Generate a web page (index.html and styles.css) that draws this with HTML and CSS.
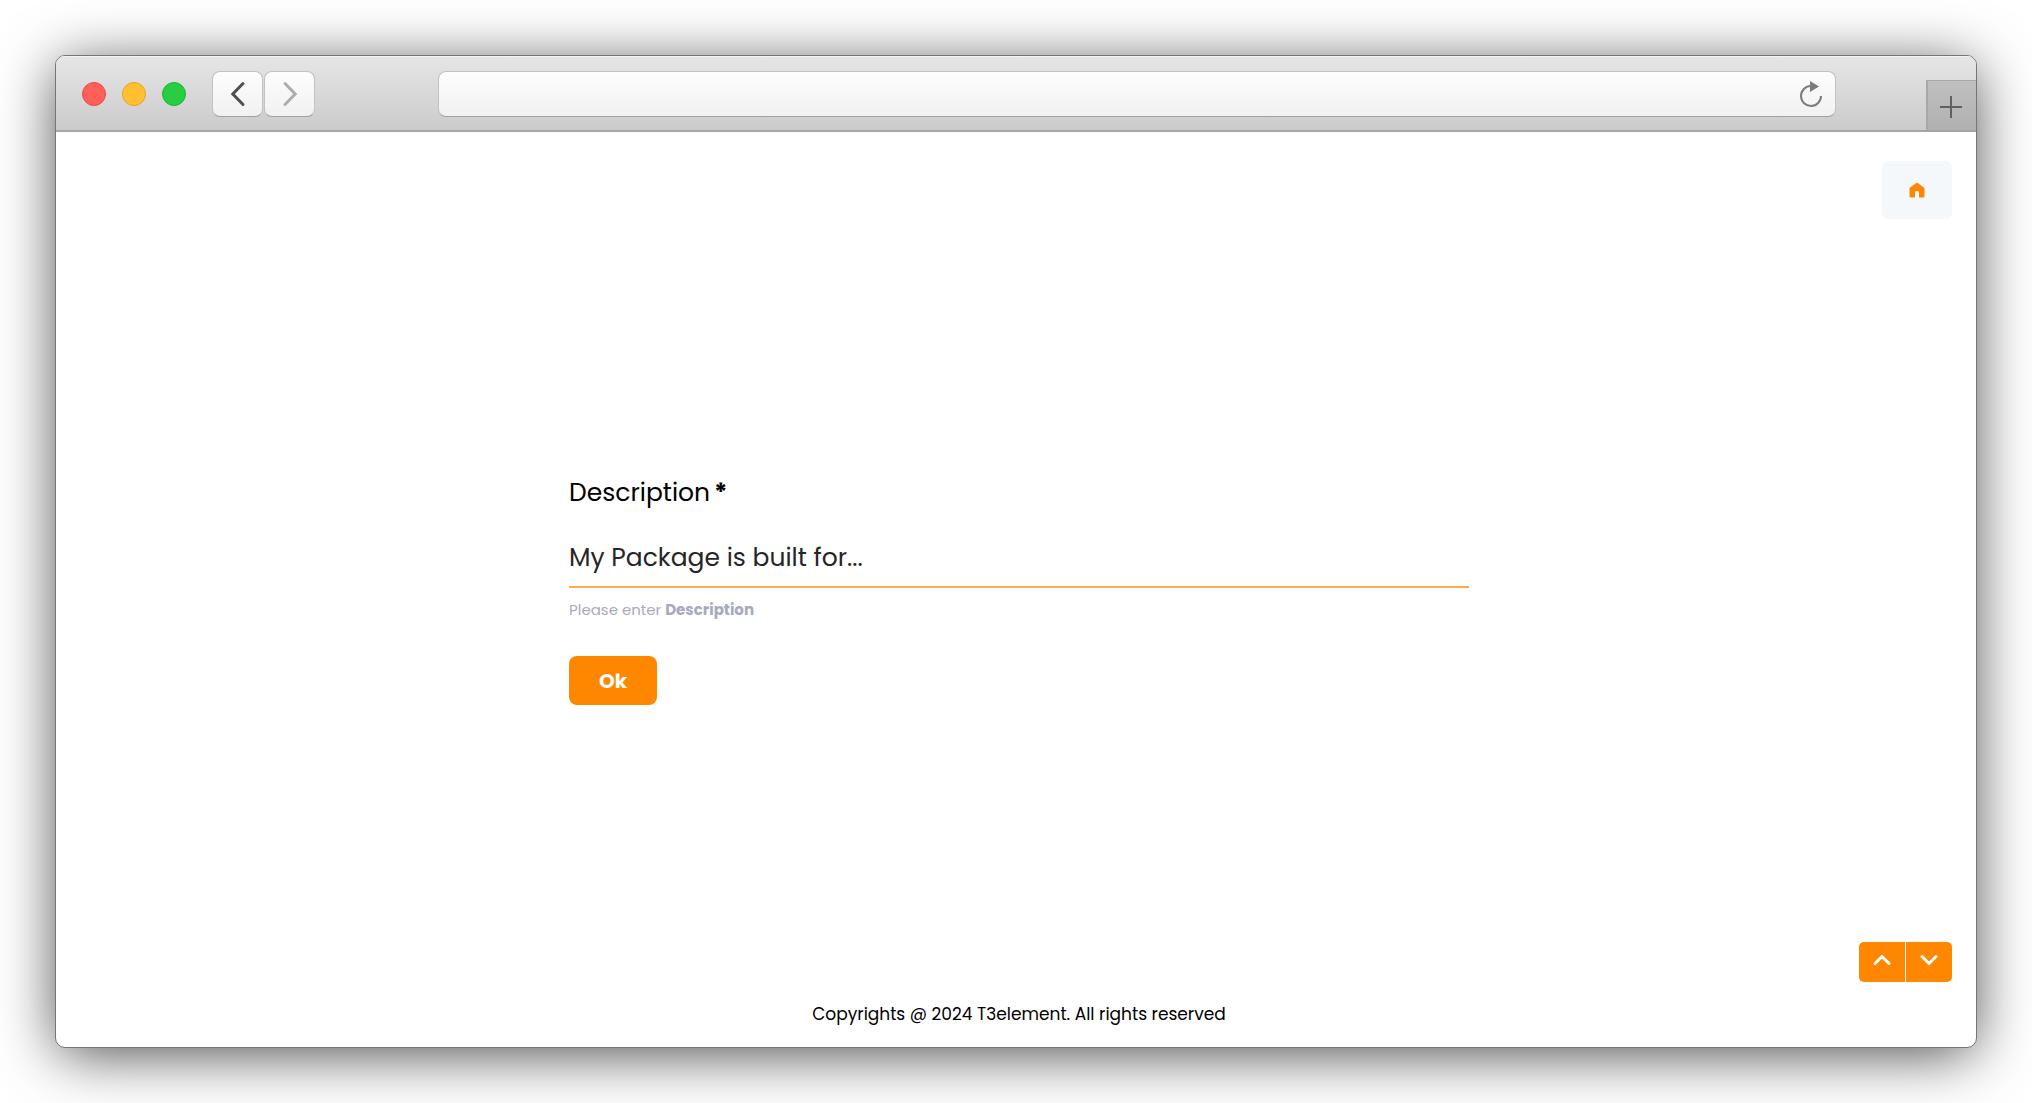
FILE: index.html
```html
<!DOCTYPE html>
<html lang="en">
<head>
<meta charset="utf-8">
<meta name="viewport" content="width=device-width, initial-scale=1">
<title>T3element</title>
<link rel="stylesheet" href="styles.css">
</head>
<body>
<div class="window">
  <header class="toolbar">
    <div class="lights">
      <span class="light light-close"></span>
      <span class="light light-minimize"></span>
      <span class="light light-zoom"></span>
    </div>
    <nav class="history">
      <button class="history-button" type="button" aria-label="Back">
        <svg width="16" height="26" viewBox="0 0 16 26" fill="none" stroke="#4f4f4f" stroke-width="3" stroke-linecap="round" stroke-linejoin="miter"><path d="M13 2.5 2.8 13 13 23.5"/></svg>
      </button>
      <button class="history-button" type="button" aria-label="Forward">
        <svg width="16" height="26" viewBox="0 0 16 26" fill="none" stroke="#adadad" stroke-width="3" stroke-linecap="round" stroke-linejoin="miter"><path d="M3 2.5 13.2 13 3 23.5"/></svg>
      </button>
    </nav>
    <div class="address">
      <input class="address-input" type="text" aria-label="Address">
      <button class="reload" type="button" aria-label="Reload">
        <svg width="24" height="28" viewBox="0 0 24 28"><path d="M11.5 6A10 10 0 1 0 22 16" fill="none" stroke="#7b7b7b" stroke-width="2"/><path d="M11 1v11l9-5.500z" fill="#7b7b7b"/></svg>
      </button>
    </div>
    <button class="new-tab" type="button" aria-label="New tab">
      <svg width="22" height="22" viewBox="0 0 22 22" stroke="#606060" stroke-width="2"><path d="M11 0v22M0 11h22"/></svg>
    </button>
  </header>

  <div class="page">
    <a class="home" href="#" aria-label="Home">
      <svg width="16" height="16" viewBox="0 0 16 16"><path d="M8 0.500 15.500 6V14.200Q15.500 15.500 14.200 15.500H10V10.300Q10 9 8 9T6 10.300V15.500H1.800Q.5 15.500.5 14.200V6Z" fill="#ff8700"/></svg>
    </a>

    <main class="main">
      <form class="form">
        <label class="label" for="description">Description <b>*</b></label>
        <input class="field" id="description" type="text" value="My Package is built for..." required aria-describedby="hint">
        <p class="hint" id="hint">Please enter <b>Description</b></p>
        <button class="ok" type="button">Ok</button>
      </form>
    </main>

    <nav class="pager">
      <button class="pager-button" type="button" aria-label="Previous">
        <svg width="18" height="12" viewBox="0 0 18 12" fill="none" stroke="#fff" stroke-width="3" stroke-linecap="round"><path d="M2 9.500 9 2.500l7 7"/></svg>
      </button>
      <button class="pager-button" type="button" aria-label="Next">
        <svg width="18" height="12" viewBox="0 0 18 12" fill="none" stroke="#fff" stroke-width="3" stroke-linecap="round"><path d="M2 2.500l7 7 7-7"/></svg>
      </button>
    </nav>

    <footer class="footer">Copyrights @ 2024 T3element. All rights reserved</footer>
  </div>
</div>
</body>
</html>
```
FILE: styles.css
```css
* {
  box-sizing: border-box;
}

body {
  display: flex;
  min-height: 100vh;
  margin: 0;
  padding: 55px;
  background: #fff;
  color: #000;
  font-family: Poppins, Inter, sans-serif;
}

button,
input {
  margin: 0;
  padding: 0;
  border: 0;
  font-family: inherit;
}

button {
  cursor: pointer;
}

svg {
  display: block;
}

.window {
  display: flex;
  flex: 1;
  flex-direction: column;
  min-width: 0;
  overflow: hidden;
  border: 1px solid #757575;
  border-radius: 10px;
  background: #fff;
  box-shadow: 0 8px 60px -4px rgba(0, 0, 0, 0.75);
}

/* Browser toolbar */

.toolbar {
  display: flex;
  align-items: center;
  height: 76px;
  padding-top: 2px;
  padding-left: 26px;
  border-bottom: 2px solid #a6a6a6;
  background: linear-gradient(#e6e6e6, #cbcbcb);
  box-shadow: inset 0 1px #f4f4f4;
}

.lights {
  display: flex;
  gap: 16px;
}

.light {
  width: 24px;
  height: 24px;
  border: 1px solid;
  border-radius: 50%;
}

.light-close {
  border-color: #e84b43;
  background: #ff6058;
}

.light-minimize {
  border-color: #e5a32a;
  background: #ffc02f;
}

.light-zoom {
  border-color: #1fb133;
  background: #28ce41;
}

.history {
  display: flex;
  gap: 1px;
  margin-left: 26px;
}

.history-button,
.address {
  height: 46px;
  border: 1px solid #c2c2c2;
  border-bottom-color: #a0a0a0;
  border-radius: 8px;
  background: linear-gradient(#fdfdfd, #f1f1f1);
}

.history-button {
  display: grid;
  place-items: center;
  width: 51px;
}

.address {
  display: flex;
  flex: 1;
  align-items: center;
  min-width: 0;
  margin: 0 90px 0 123px;
  padding: 0 12px 0 16px;
}

.address-input {
  flex: 1;
  min-width: 0;
  background: transparent;
  font-size: 17px;
}

.reload {
  background: transparent;
}

.new-tab {
  display: grid;
  align-self: flex-end;
  place-items: center;
  width: 50px;
  height: 50px;
  padding: 2px 2px 0 0;
  border-top: 1px solid #a8a8a8;
  border-left: 2px solid #a8a8a8;
  background: linear-gradient(#c0c0c0, #b0b0b0);
}

/* Page content */

.page {
  display: flex;
  flex: 1;
  flex-direction: column;
  padding: 29px 24px 21px 30px;
}

.home {
  display: grid;
  align-self: flex-end;
  place-items: center;
  width: 70px;
  height: 58px;
  border-radius: 6px;
  background: #f4f8fb;
}

.main {
  display: flex;
  flex: 1;
  align-items: center;
  justify-content: center;
  padding-top: 18px;
}

.form {
  display: flex;
  flex-direction: column;
  align-items: flex-start;
  width: 100%;
  max-width: 900px;
}

.label {
  display: flex;
  gap: 4px;
  font-size: 25px;
  line-height: 38px;
}

.field {
  width: 100%;
  height: 59px;
  margin-top: 17px;
  border-bottom: 2px solid #ffab4d;
  outline: 0;
  background: transparent;
  color: #262626;
  font-size: 25px;
}

.hint {
  margin: 10px 0 34px;
  color: #a6aabf;
  font-size: 15px;
  line-height: 24px;
}

.ok {
  width: 88px;
  height: 49px;
  border-radius: 8px;
  background: #ff8700;
  color: #fff;
  font-size: 20px;
  font-weight: 700;
}

.pager {
  display: flex;
  align-self: flex-end;
  gap: 1px;
  overflow: hidden;
  border-radius: 5px;
}

.pager-button {
  display: flex;
  align-items: flex-start;
  justify-content: center;
  width: 46px;
  height: 40px;
  padding-top: 12px;
  background: #ff8700;
}

.footer {
  margin-top: 20px;
  font-size: 17px;
  line-height: 24px;
  text-align: center;
}
```
